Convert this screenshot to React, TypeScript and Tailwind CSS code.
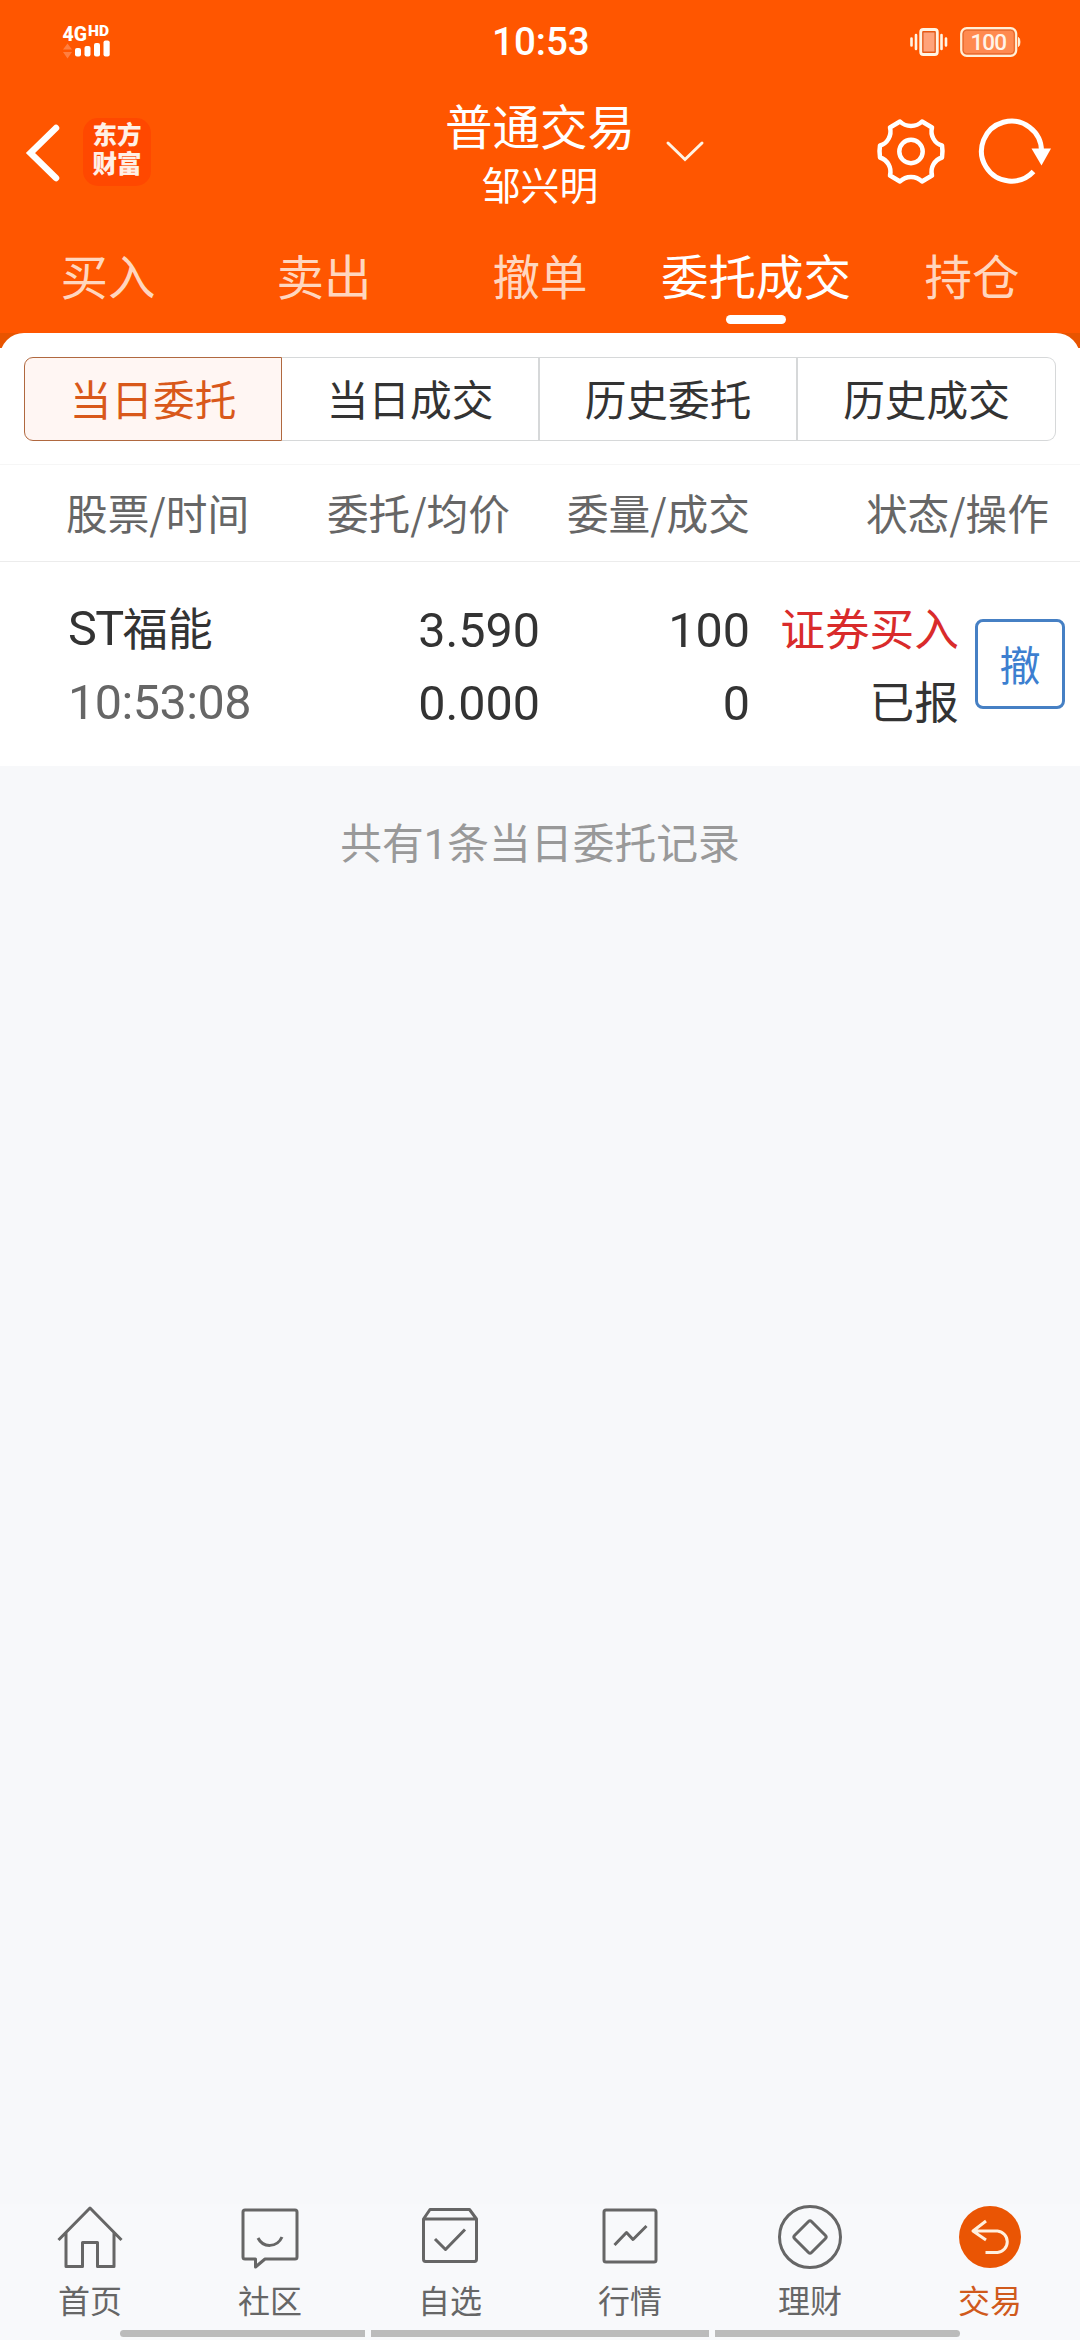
import React from "react";

const cjk = "font-['Noto_Sans_CJK_SC',sans-serif]";
const latin = "font-['Roboto','Noto_Sans_CJK_SC',sans-serif]";

function StatusBar() {
  return (
    <div className="flex h-[84px] items-center text-white">
      <svg className="ml-[62px]" width="50" height="36" viewBox="0 0 50 36" overflow="visible" fill="#fff">
        <text x="0.5" y="16.500" fontFamily="Roboto, sans-serif" fontWeight="800" fontSize="20.5" textLength="24.5" lengthAdjust="spacingAndGlyphs">4G</text>
        <text x="26" y="11.5" fontFamily="Roboto, sans-serif" fontWeight="900" fontSize="14" textLength="21" lengthAdjust="spacingAndGlyphs">HD</text>
        <path d="M1 25.5L5.5 19.500L10 25.500ZM1 28H10L5.500 34.500Z" fill="#ff7f40" />
        <rect x="13" y="24" width="6" height="8.500" rx="2" />
        <rect x="22.500" y="22" width="6" height="10.500" rx="2" />
        <rect x="32" y="19" width="6" height="13.500" rx="2" />
        <rect x="41.500" y="16.500" width="6.200" height="16" rx="2" />
      </svg>
      <div className={`ml-[380px] w-[97px] pt-[1px] text-[38.5px] leading-none font-medium ${latin}`}>10:53</div>
      <svg className="ml-[320px]" width="40" height="30" viewBox="0 0 40 30">
        <rect x="11.800" y="2.500" width="16.400" height="25" rx="2.500" fill="#ff5600" stroke="#fff4e4" strokeWidth="3" />
        <rect x="14" y="5" width="12" height="20" fill="#ffa37a" stroke="#d85a20" strokeWidth="1" />
        <path d="M2.500 11.500V18.500M7 8V22M32.500 8V22M37 11.500V18.500" stroke="#fff4e4" strokeWidth="2.600" strokeLinecap="round" />
      </svg>
      <svg className="ml-[11px]" width="62" height="32" viewBox="0 0 62 32">
        <rect x="1.200" y="2.200" width="55" height="27.600" rx="5.500" fill="#ff8a50" stroke="#fff0d8" strokeWidth="2.200" />
        <rect x="3.200" y="4.200" width="51" height="23.600" rx="3.500" fill="none" stroke="#e06428" strokeWidth="1" />
        <path d="M58.500 11.500C60.400 13 60.400 19 58.500 20.500Z" fill="#fff0d8" stroke="#fff0d8" />
        <text x="28.700" y="23.700" textAnchor="middle" fontFamily="Roboto, sans-serif" fontWeight="500" fontSize="22.500" textLength="36.500" fill="#fff4e8">100</text>
      </svg>
    </div>
  );
}

function TitleBar() {
  return (
    <div className="flex h-[136px] items-center text-white">
      <svg className="ml-[25px]" width="36" height="60" viewBox="0 0 36 60" fill="none" stroke="#fff" strokeWidth="6.500">
        <path d="M31 6L5.500 31L31 56" strokeLinecap="round" strokeLinejoin="miter" />
      </svg>
      <div className={`ml-[22px] flex size-[68px] flex-col items-center justify-center rounded-[15px] bg-[#ff4800] pb-[7px] text-[24.500px] leading-[28.500px] font-black text-[#fff0e6] ${cjk}`}>
        <span>东方</span>
        <span>财富</span>
      </div>
      <div className="ml-[289px] flex w-[200px] flex-col items-center">
        <div className="h-[64px] text-[47.500px] leading-[62px]">普通交易</div>
        <div className="h-[52px] text-[38.800px] leading-[50px]">邹兴明</div>
      </div>
      <svg className="ml-[25px]" width="40" height="24" viewBox="0 0 40 24" fill="none" stroke="#fff4e4" strokeWidth="3">
        <path d="M3 3L20 19.500L37 3" strokeLinecap="round" />
      </svg>
      <svg className="ml-[171px]" width="70" height="70" viewBox="0 0 70 70" fill="none" stroke="#fff" strokeWidth="4.500" strokeLinejoin="round">
        <path d="M24 4.500C30 10.500 40 10.500 46 4.500L56 10.500C54 18.500 58.500 26.500 66 28.500Q67 34 66 40.500C58.500 43 54 50.500 56 58.500L46 64.500C40 58.500 30 58.500 24 64.500L14 58.500C16 50.500 11.500 43 4 40.500Q3 34 4 28.500C11.500 26.500 16 18.500 14 10.500Z" />
        <circle cx="35" cy="34.500" r="11.700" />
      </svg>
      <svg className="ml-[32px]" width="76" height="70" viewBox="0 0 76 70">
        <path d="M55.500 54.500A30 30 0 1 1 63.500 34" fill="none" stroke="#fff" strokeWidth="5" />
        <path d="M53.500 31.500H73L63.500 48.500Z" fill="#fff" />
      </svg>
    </div>
  );
}

const tabs = ["买入", "卖出", "撤单", "委托成交", "持仓"];

function Tabs() {
  return (
    <div className="grid h-[113px] grid-cols-5 text-[47.500px] leading-[110px]">
      {tabs.map((t) => {
        const active = t === "委托成交";
        return (
          <div key={t} className={`relative text-center whitespace-nowrap ${active ? "text-white" : "text-[#ffd6bf]"}`}>
            {t}
            {active && <div className="absolute bottom-[9px] left-[78px] h-[9px] w-[60px] rounded-full bg-white" />}
          </div>
        );
      })}
    </div>
  );
}

function Segments() {
  const base = "flex items-center justify-center border-[#d6d8d9] pb-[2px] text-[#333]";
  return (
    <div className="mx-[24px] mt-[24px] grid h-[84px] grid-cols-4 text-[41.700px]">
      <div className="flex items-center justify-center rounded-l-[9px] border border-[#b0683f] bg-[#fff6f3] pb-[2px] text-[#d9581a]">当日委托</div>
      <div className={`${base} border-y border-r-2`}>当日成交</div>
      <div className={`${base} border-y border-r-2`}>历史委托</div>
      <div className={`${base} rounded-r-[9px] border-y border-r`}>历史成交</div>
    </div>
  );
}

function Orders() {
  return (
    <>
      <div className="mt-[23px] flex h-[98px] items-center border-y border-y-[#ececec] border-t-[#f6f6f6] pb-[2px] text-[41.700px] whitespace-nowrap text-[#666]">
        <div className="w-[248px] pl-[66px]">股票/时间</div>
        <div className="w-[262px] text-right">委托/均价</div>
        <div className="w-[240px] text-right">委量/成交</div>
        <div className="w-[299px] text-right">状态/操作</div>
      </div>
      <div className="flex h-[204px] items-center whitespace-nowrap text-[#333]">
        <div className="w-[300px] pl-[68px]">
          <div className="flex h-[73px] items-center text-[45px]">
            <span className={`pt-[3px] text-[48.500px] tracking-[-1.500px] ${latin}`}>ST</span>
            <span className="pb-[1px]">福能</span>
          </div>
          <div className={`flex h-[73px] items-center pt-[6px] text-[48.500px] tracking-[-0.500px] text-[#666] ${latin}`}>10:53:08</div>
        </div>
        <div className={`w-[240px] text-right text-[48.500px] ${latin}`}>
          <div className="h-[73px] leading-[79px]">3.590</div>
          <div className="h-[73px] leading-[79px]">0.000</div>
        </div>
        <div className={`w-[210px] text-right text-[48.500px] ${latin}`}>
          <div className="h-[73px] leading-[79px]">100</div>
          <div className="h-[73px] leading-[79px]">0</div>
        </div>
        <div className="w-[209px] text-right text-[44.700px]">
          <div className="h-[73px] leading-[72px] text-[#d92b2b]">证券买入</div>
          <div className="h-[73px] leading-[72px]">已报</div>
        </div>
        <button className="ml-[16px] flex size-[90px] items-center justify-center rounded-[8px] border-3 border-[#4680c4] pb-[1px] text-[41px] text-[#3d7fd0]">撤</button>
      </div>
    </>
  );
}

const items = [
  {
    label: "首页",
    icon: <path d="M3.500 36L35 4L66.500 36M11 29V62.500H27.500V38.500H42.500V62.500H59V29" />,
  },
  {
    label: "社区",
    icon: (
      <>
        <path d="M10 6H60Q62 6 62 8V53Q62 55 60 55H30L20.500 63V55H10Q8 55 8 53V8Q8 6 10 6Z" />
        <path d="M23 34C28 44 42 44 47 33" />
      </>
    ),
  },
  {
    label: "自选",
    icon: (
      <>
        <path d="M8.500 15L15 5.500H54.500L61.500 15V55Q61.500 57.500 59.500 57.500H10.500Q8.500 57.500 8.500 55ZM8.500 15H61.500" />
        <path d="M20 35L30.500 45.500L50 25.500" />
      </>
    ),
  },
  {
    label: "行情",
    icon: (
      <>
        <rect x="9" y="6" width="52" height="52" rx="2" />
        <path d="M19.500 41L31.500 28.500L38 35.500L51.500 22" />
      </>
    ),
  },
  {
    label: "理财",
    icon: (
      <>
        <circle cx="35" cy="33" r="30.500" />
        <path d="M33.500 17.500Q35 16 36.500 17.500L50.500 31.500Q52 33 50.500 34.500L36.500 48.500Q35 50 33.500 48.500L19.500 34.500Q18 33 19.500 31.500Z" />
      </>
    ),
  },
  {
    label: "交易",
    icon: (
      <>
        <circle cx="35" cy="33" r="31" fill="#ea5504" stroke="none" />
        <path d="M31 17L18 27L31 36M18 27H42.500A10.800 10.800 0 0 1 42.500 48.500H30.500" stroke="#fff0de" />
      </>
    ),
  },
];

function BottomNav() {
  return (
    <nav className="bg-[#f8f9fb]">
      <div className="grid h-[126px] grid-cols-6">
        {items.map((it) => (
          <div key={it.label} className={`flex flex-col items-center text-[32px] leading-[38px] ${it.label === "交易" ? "text-[#d05a1c]" : "text-[#666]"}`}>
            <svg width="70" height="70" viewBox="0 0 70 70" fill="none" stroke="#666" strokeWidth="3" strokeLinejoin="round">
              {it.icon}
            </svg>
            <span className="mt-[6px]">{it.label}</span>
          </div>
        ))}
      </div>
      <div className="flex h-[10px] gap-[6px] px-[120px]">
        <div className="h-[7px] w-[245px] rounded-l-full bg-[#bbb]" />
        <div className="h-[7px] w-[338px] bg-[#bbb]" />
        <div className="h-[7px] w-[245px] rounded-r-full bg-[#bbb]" />
      </div>
    </nav>
  );
}

export default function App() {
  return (
    <div className={`flex h-[2340px] w-[1080px] flex-col overflow-hidden bg-[#f7f8fa] ${cjk}`}>
      <header className="bg-[#ff5600]">
        <StatusBar />
        <TitleBar />
        <Tabs />
      </header>
      <main className="flex-1">
        <div className="bg-[linear-gradient(#e85400_15px,#ffffff_15px)]">
          <div className="h-[433px] overflow-hidden rounded-t-[24px] bg-white">
            <Segments />
            <Orders />
          </div>
        </div>
        <p className="mt-[51px] text-center text-[41.800px] leading-[48px] text-[#999]">
          共有<span className={latin}>1</span>条当日委托记录
        </p>
      </main>
      <BottomNav />
    </div>
  );
}
